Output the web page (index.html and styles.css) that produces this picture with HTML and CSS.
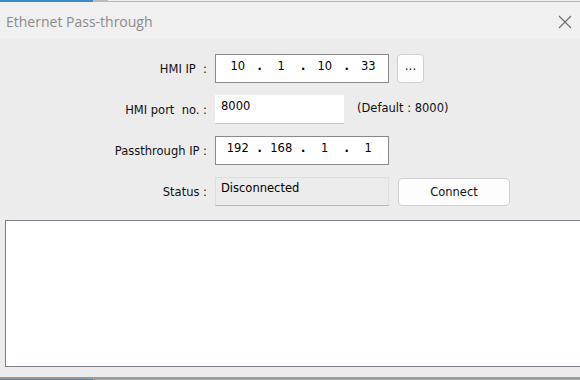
FILE: index.html
```html
<!DOCTYPE html>
<html lang="en">
<head>
    <meta charset="UTF-8">
    <title>Ethernet Pass-through</title>
    <link rel="stylesheet" href="styles.css">
</head>
<body>
    <div class="edge-top">
        <span class="edge-blue"></span>
        <span class="edge-gray"></span>
        <span class="edge-line"></span>
    </div>
    <div class="dialog">
        <div class="titlebar">
            <span class="title">Ethernet Pass-through</span>
            <svg class="close" width="14" height="14" viewBox="0 0 14 14">
                <path d="M1 1 L13 13 M13 1 L1 13" stroke="#6b6b6b" stroke-width="1.1" fill="none"/>
            </svg>
        </div>
        <div class="form">
            <label class="lbl">HMI IP&nbsp;&nbsp;:</label>
            <div class="ipbox">
                <span class="seg">10</span><span class="dot">.</span>
                <span class="seg">1</span><span class="dot">.</span>
                <span class="seg">10</span><span class="dot">.</span>
                <span class="seg">33</span>
            </div>
            <div class="extra"><button class="btn-dots">...</button></div>

            <label class="lbl">HMI port&nbsp;&nbsp;no. :</label>
            <div class="field-row">
                <div class="portbox">8000</div>
                <span class="hint">(Default : 8000)</span>
            </div>
            <div></div>

            <label class="lbl">Passthrough IP :</label>
            <div class="ipbox">
                <span class="seg">192</span><span class="dot">.</span>
                <span class="seg">168</span><span class="dot">.</span>
                <span class="seg">1</span><span class="dot">.</span>
                <span class="seg">1</span>
            </div>
            <div></div>

            <label class="lbl">Status :</label>
            <div class="statusbox">Disconnected</div>
            <div class="extra"><button class="btn-connect">Connect</button></div>
        </div>
        <div class="log"></div>
        <div class="footer"></div>
    </div>
    <div class="edge-bottom">
        <span class="edge-blue"></span>
        <span class="edge-pic"></span>
    </div>
</body>
</html>
```

FILE: styles.css
```css
html, body {
    margin: 0;
    padding: 0;
    width: 580px;
    height: 380px;
    overflow: hidden;
}
body {
    font-family: Tahoma, "DejaVu Sans", sans-serif;
    background-color: #ececec;
    color: #000000;
    display: flex;
    flex-direction: column;
}
.edge-top {
    display: flex;
    height: 2px;
}
.edge-blue {
    width: 93px;
    background-color: #3a8bcb;
}
.edge-gray {
    width: 15px;
    background-color: #bcbcbc;
}
.edge-line {
    flex: 1;
    background-color: #f0f0f0;
    border-bottom: 1px solid #b5b5b5;
    height: 1px;
}
.dialog {
    flex: 1;
    display: flex;
    flex-direction: column;
}
.titlebar {
    height: 37px;
    background-color: #f0f0f0;
    display: flex;
    align-items: center;
    justify-content: space-between;
    padding: 0 8px 0 6px;
}
.title {
    font-family: "Open Sans", "Noto Sans", sans-serif;
    font-size: 14px;
    color: #8a8a8a;
    margin-top: 1px;
}
.close {
    margin-top: 2px;
}
.form {
    display: grid;
    grid-template-columns: 207px 174px auto;
    grid-auto-rows: 29px;
    column-gap: 8px;
    row-gap: 12px;
    padding-top: 15px;
    font-size: 12px;
}
.lbl {
    text-align: right;
    align-self: center;
    font-family: "DejaVu Sans", sans-serif;
    font-size: 11.5px;
    color: #111111;
}
.ipbox {
    height: 29px;
    box-sizing: border-box;
    background-color: #ffffff;
    border: 1px solid #8a8a8a;
    display: flex;
    align-items: flex-start;
    padding: 4px 0 0 2px;
    font-family: "DejaVu Sans", sans-serif;
    font-size: 11.5px;
}
.seg {
    flex: 1;
    text-align: center;
}
.dot {
    width: 4px;
    text-align: center;
    font-weight: bold;
}
.extra {
    display: flex;
    align-items: center;
}
.btn-dots {
    width: 27px;
    height: 29px;
    margin-top: -1px;
    background-color: #fdfdfd;
    border: 1px solid #cfcfcf;
    border-radius: 4px;
    font-family: "DejaVu Sans", sans-serif;
    font-size: 12px;
    padding: 0 0 4px 0;
    color: #111;
}
.field-row {
    display: flex;
    align-items: center;
}
.portbox {
    width: 129px;
    height: 29px;
    flex-shrink: 0;
    box-sizing: border-box;
    background-color: #ffffff;
    border-bottom: 1px solid #c8c8c8;
    padding: 4px 0 0 6px;
    font-family: "DejaVu Sans", sans-serif;
    font-size: 11.5px;
}
.hint {
    margin-left: 13px;
    white-space: nowrap;
    font-family: "DejaVu Sans", sans-serif;
    font-size: 11.5px;
    color: #111111;
    margin-top: -3px;
}
.statusbox {
    height: 29px;
    box-sizing: border-box;
    background-color: #ebebeb;
    border: 1px solid #dedede;
    border-bottom-color: #b9b9b9;
    padding: 3px 0 0 5px;
    font-family: "DejaVu Sans", sans-serif;
    font-size: 11.5px;
}
.btn-connect {
    width: 112px;
    height: 28px;
    margin-left: 1px;
    background-color: #fdfdfd;
    border: 1px solid #cfcfcf;
    border-radius: 4px;
    font-family: "DejaVu Sans", sans-serif;
    font-size: 11.5px;
    color: #111;
}
.log {
    margin: 14px 0 0 5px;
    height: 145px;
    background-color: #ffffff;
    border: 1px solid #7c8189;
    border-right: none;
}
.footer {
    flex: 1;
    border-bottom: 2px solid #9a9a9a;
}
.edge-bottom {
    display: flex;
    height: 1px;
}
.edge-pic {
    flex: 1;
    background-color: #a0a4a0;
}
```
